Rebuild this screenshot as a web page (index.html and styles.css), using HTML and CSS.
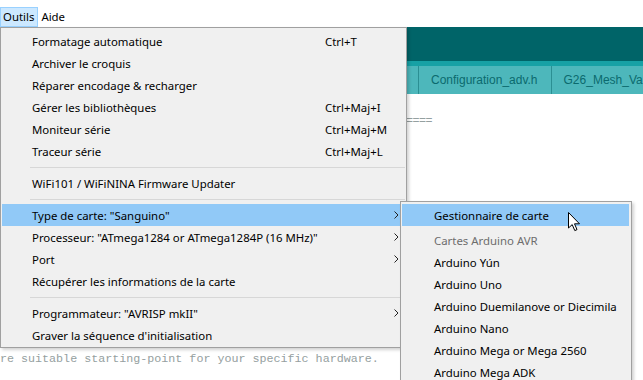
FILE: index.html
```html
<!DOCTYPE html>
<html lang="fr">
<head>
<meta charset="utf-8">
<title>Arduino - Outils</title>
<link rel="stylesheet" href="styles.css">
</head>
<body>
<div class="menubar">
  <span class="mb-item active">Outils</span>
  <span class="mb-item">Aide</span>
</div>
<div class="ide">
  <div class="toolbar"></div>
  <div class="tabs">
    <div class="tab tab-cut"></div>
    <div class="tab">Configuration_adv.h</div>
    <div class="tab">G26_Mesh_Validation_Tool.cpp</div>
  </div>
  <div class="editor">
    <div class="line">&nbsp;</div>
    <div class="line"><span class="comment rule">====</span></div>
    <div class="line">&nbsp;</div>
    <div class="line">&nbsp;</div>
    <div class="line">&nbsp;</div>
    <div class="line">&nbsp;</div>
    <div class="line">&nbsp;</div>
    <div class="line">&nbsp;</div>
    <div class="line">&nbsp;</div>
    <div class="line">&nbsp;</div>
    <div class="line">&nbsp;</div>
    <div class="line">&nbsp;</div>
    <div class="line">&nbsp;</div>
    <div class="line">&nbsp;</div>
    <div class="line">&nbsp;</div>
    <div class="line comment">re suitable starting-point for your specific hardware.</div>
  </div>
</div>

<div class="menu dropdown">
  <div class="item"><span class="label">Formatage automatique</span><span class="key">Ctrl+T</span></div>
  <div class="item"><span class="label">Archiver le croquis</span></div>
  <div class="item"><span class="label">Réparer encodage &amp; recharger</span></div>
  <div class="item"><span class="label">Gérer les bibliothèques</span><span class="key">Ctrl+Maj+I</span></div>
  <div class="item"><span class="label">Moniteur série</span><span class="key">Ctrl+Maj+M</span></div>
  <div class="item"><span class="label">Traceur série</span><span class="key">Ctrl+Maj+L</span></div>
  <div class="sep"></div>
  <div class="item"><span class="label">WiFi101 / WiFiNINA Firmware Updater</span></div>
  <div class="sep"></div>
  <div class="item selected"><span class="label">Type de carte: "Sanguino"</span><svg class="arrow" width="5" height="8" viewBox="0 0 5 8"><path d="M0.5 0.5 L4 4 L0.5 7.5" fill="none" stroke="#222" stroke-width="1"/></svg></div>
  <div class="item"><span class="label">Processeur: "ATmega1284 or ATmega1284P (16 MHz)"</span><svg class="arrow" width="5" height="8" viewBox="0 0 5 8"><path d="M0.5 0.5 L4 4 L0.5 7.5" fill="none" stroke="#222" stroke-width="1"/></svg></div>
  <div class="item"><span class="label">Port</span><svg class="arrow" width="5" height="8" viewBox="0 0 5 8"><path d="M0.5 0.5 L4 4 L0.5 7.5" fill="none" stroke="#222" stroke-width="1"/></svg></div>
  <div class="item"><span class="label">Récupérer les informations de la carte</span></div>
  <div class="sep"></div>
  <div class="item"><span class="label">Programmateur: "AVRISP mkII"</span><svg class="arrow" width="5" height="8" viewBox="0 0 5 8"><path d="M0.5 0.5 L4 4 L0.5 7.5" fill="none" stroke="#222" stroke-width="1"/></svg></div>
  <div class="item"><span class="label">Graver la séquence d'initialisation</span></div>
</div>

<div class="menu submenu">
  <div class="item selected first"><span class="label">Gestionnaire de carte</span></div>
  <div class="item disabled"><span class="label">Cartes Arduino AVR</span></div>
  <div class="item"><span class="label">Arduino Yún</span></div>
  <div class="item"><span class="label">Arduino Uno</span></div>
  <div class="item"><span class="label">Arduino Duemilanove or Diecimila</span></div>
  <div class="item"><span class="label">Arduino Nano</span></div>
  <div class="item"><span class="label">Arduino Mega or Mega 2560</span></div>
  <div class="item"><span class="label">Arduino Mega ADK</span></div>
</div>

<svg class="cursor" width="13" height="20" viewBox="0 0 13 20">
  <path d="M0.5 0.5 L0.5 16 L4.2 12.6 L6.8 18.6 L9 17.6 L6.5 11.8 L11.5 11.8 Z" fill="#fff" stroke="#000" stroke-width="1" stroke-linejoin="miter"/>
</svg>
</body>
</html>
```

FILE: styles.css
```css
html, body {
  margin: 0;
  padding: 0;
}

body {
  width: 643px;
  height: 380px;
  overflow: hidden;
  position: relative;
  background: #ffffff;
  font-family: "Noto Sans", "Open Sans", sans-serif;
  font-size: 11.4px;
  color: #000;
}

.menubar {
  height: 27px;
  display: flex;
  align-items: flex-end;
  background: #ffffff;
}

.mb-item {
  height: 17px;
  line-height: 17px;
  padding: 0 3px 1px 2px;
  border: 1px solid transparent;
}

.mb-item.active {
  background: #cce8ff;
  border-color: #99d1ff;
}

.ide {
  display: flex;
  flex-direction: column;
}

.toolbar {
  height: 34px;
  background: #006468;
}

.tabs {
  height: 33px;
  box-sizing: border-box;
  padding-top: 5px;
  background: #17a1a5;
  display: flex;
  overflow: hidden;
}

.tab {
  flex: 0 0 auto;
  height: 28px;
  line-height: 28px;
  box-sizing: border-box;
  background: #4db7bb;
  border-right: 1px solid #2b8f93;
  padding: 0 13px 0 12px;
  font-family: "Liberation Sans", Arial, sans-serif;
  font-size: 12px;
  color: #0b6a6e;
  white-space: nowrap;
}

.tab-cut {
  width: 419px;
  padding: 0;
}

.editor {
  padding-top: 2px;
  background: #fff;
}

.line {
  height: 17px;
  line-height: 17px;
  font-family: "Liberation Mono", "Courier New", monospace;
  font-size: 11.7px;
  white-space: pre;
}

.comment {
  color: #95a0a0;
}

.rule {
  margin-left: 406px;
  letter-spacing: -0.5px;
}

.menu {
  position: absolute;
  background: #f0f0f0;
  border: 1px solid #a0a0a0;
  box-sizing: border-box;
  box-shadow: 2px 2px 3px rgba(0, 0, 0, 0.18);
}

.dropdown {
  left: 0;
  top: 27px;
  width: 407px;
  padding: 2px 1px 1px 1px;
}

.submenu {
  left: 400px;
  top: 201px;
  bottom: -6px;
  width: 232px;
  padding: 2px 2px 0 1px;
}

.item {
  height: 22px;
  display: flex;
  align-items: center;
  padding-left: 30px;
  padding-right: 6px;
  white-space: nowrap;
}

.submenu .item {
  padding-left: 32px;
}

.item.selected {
  background: #91c9f7;
}

.submenu .item.first {
  margin-bottom: 3px;
}

.item.disabled {
  color: #6d6d6d;
}

.label {
  flex: 0 0 293px;
}

.submenu .label {
  flex: 1 1 auto;
}

.key {
  flex: 1 1 auto;
}

.arrow {
  margin-left: auto;
}

.sep {
  height: 10px;
  margin-left: 28px;
  display: flex;
  align-items: center;
}

.sep::before {
  content: "";
  display: block;
  width: 100%;
  height: 1px;
  background: #d7d7d7;
}

.cursor {
  position: absolute;
  left: 568px;
  top: 212px;
}
```
